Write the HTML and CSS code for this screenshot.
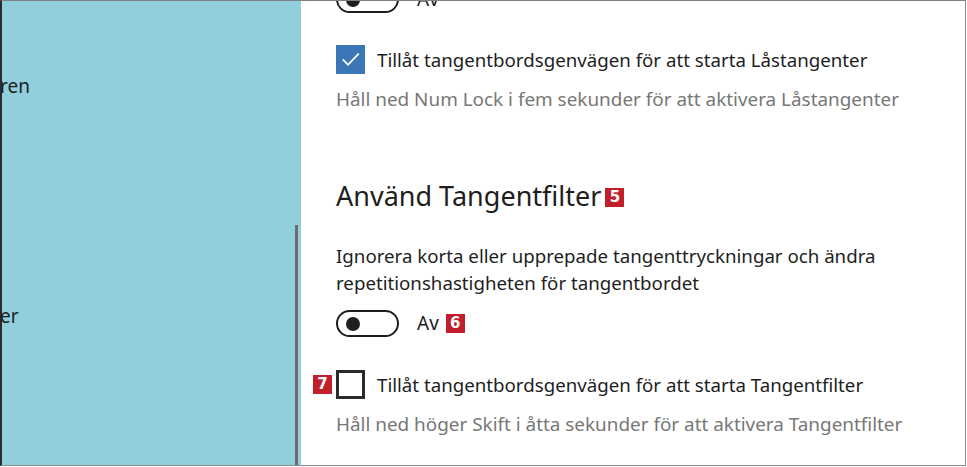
FILE: index.html
```html
<!DOCTYPE html>
<html lang="sv">
<head>
<meta charset="utf-8">
<link rel="stylesheet" href="styles.css">
</head>
<body>
<div class="frame">
  <aside class="sidebar">
    <div class="nav-item nav-1">ren</div>
    <div class="nav-item nav-2">er</div>
    <div class="scrollbar"></div>
  </aside>
  <main class="content">
    <div class="toggle-row toggle-top">
      <span class="toggle"><span class="knob"></span></span>
      <span class="toggle-label">Av</span>
    </div>
    <div class="check-row check-1">
      <span class="checkbox checked">
        <svg viewBox="0 0 30 30" width="30" height="30"><path d="M7 15.5 L12.5 21 L23.5 9.5" fill="none" stroke="#fff" stroke-width="1.8"/></svg>
      </span>
      <span class="check-label">Tillåt tangentbordsgenvägen för att starta Låstangenter</span>
    </div>
    <p class="hint hint-1">Håll ned Num Lock i fem sekunder för att aktivera Låstangenter</p>
    <h2 class="heading">Använd Tangentfilter<span class="badge badge-h">5</span></h2>
    <p class="para">Ignorera korta eller upprepade tangenttryckningar och ändra<br>repetitionshastigheten för tangentbordet</p>
    <div class="toggle-row toggle-2">
      <span class="toggle"><span class="knob"></span></span>
      <span class="toggle-label">Av</span><span class="badge">6</span>
    </div>
    <div class="check-row check-2">
      <span class="badge badge-left">7</span>
      <span class="checkbox"></span>
      <span class="check-label">Tillåt tangentbordsgenvägen för att starta Tangentfilter</span>
    </div>
    <p class="hint hint-2">Håll ned höger Skift i åtta sekunder för att aktivera Tangentfilter</p>
  </main>
</div>
</body>
</html>
```
FILE: styles.css
```css
* { box-sizing: border-box; }
html, body { margin: 0; padding: 0; }
body {
  width: 967px;
  height: 467px;
  overflow: hidden;
  background: #fff;
  font-family: "Noto Sans", "Open Sans", sans-serif;
  color: #1e1e1e;
}
.frame {
  width: 966px;
  height: 466px;
  display: flex;
  border-top: 1px solid #808080;
  border-left: 2px solid #2a2a2a;
  border-right: 1px solid #8a8a8a;
  border-bottom: 1px solid #8a8a8a;
  overflow: hidden;
}
.sidebar {
  position: relative;
  width: 299px;
  flex: none;
  background: #90cfdb;
}
.nav-item {
  position: absolute;
  left: -2px;
  font-size: 19px;
  color: #1e1e1e;
  line-height: 26px;
}
.nav-1 { top: 72px; }
.nav-2 { top: 302px; }
.scrollbar {
  position: absolute;
  left: 293px;
  top: 224px;
  bottom: 0;
  width: 3px;
  background: #6c6c6c;
}
.content {
  flex: 1;
  padding-left: 35px;
  display: flex;
  flex-direction: column;
  align-items: flex-start;
}
.toggle-row {
  display: flex;
  align-items: center;
  height: 27px;
}
.toggle-top { margin-top: -15px; }
.toggle {
  width: 63px;
  height: 27px;
  border: 2.5px solid #1e1e1e;
  border-radius: 14px;
  display: flex;
  align-items: center;
  padding-left: 8px;
}
.knob {
  width: 14px;
  height: 14px;
  border-radius: 50%;
  background: #1e1e1e;
}
.toggle-label {
  font-size: 19px;
  margin-left: 18px;
  line-height: 27px;
}
.badge {
  display: inline-flex;
  align-items: center;
  justify-content: center;
  width: 19px;
  height: 19px;
  background: #c21f2d;
  color: #fff;
  font-family: "DejaVu Sans", sans-serif;
  font-weight: bold;
  font-size: 15px;
  line-height: 1;
  margin-left: 7px;
}
.check-row {
  display: flex;
  align-items: center;
  height: 30px;
}
.check-1 { margin-top: 31px; }
.check-2 { margin-top: 32px; margin-left: -23px; }
.badge-left { margin-left: 0; margin-right: 4px; }
.checkbox {
  width: 29px;
  height: 29px;
  border: 3px solid #2a2a2a;
  display: flex;
  align-items: center;
  justify-content: center;
}
.checkbox.checked {
  background: #3b77b6;
  border: none;
}
.checkbox svg { display: block; }
.check-label {
  font-size: 18.7px;
  margin-left: 12px;
}
.hint {
  margin: 12px 0 0;
  font-size: 18.9px;
  line-height: 26px;
  color: #777;
}
.heading {
  margin: 66px 0 0;
  font-size: 27px;
  font-weight: normal;
  line-height: 36px;
  display: flex;
  align-items: center;
}
.badge-h { margin-left: 4px; margin-top: 2px; }
.para {
  margin: 28px 0 0;
  font-size: 18.7px;
  line-height: 27px;
}
.toggle-2 { margin-top: 14px; }
```
